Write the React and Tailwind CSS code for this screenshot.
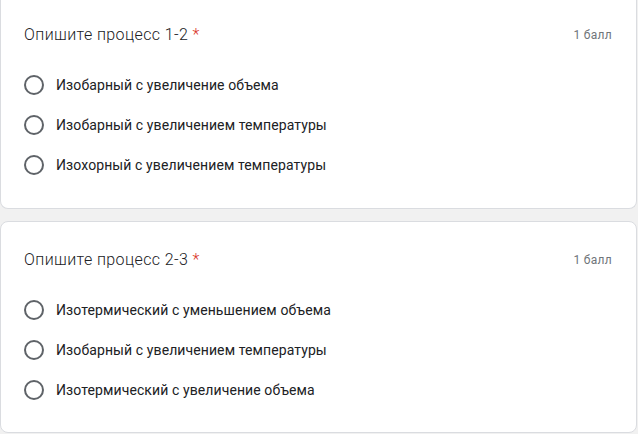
const questions = [
  {
    title: "Опишите процесс 1-2",
    options: [
      "Изобарный с увеличение объема",
      "Изобарный с увеличением температуры",
      "Изохорный с увеличением температуры",
    ],
  },
  {
    title: "Опишите процесс 2-3",
    options: [
      "Изотермический с уменьшением объема",
      "Изобарный с увеличением температуры",
      "Изотермический с увеличение объема",
    ],
  },
];

function Question({ q, first }) {
  return (
    <div
      className={
        "bg-white border border-[#dadce0] rounded-lg pl-[23px] pr-[24px] " +
        (first ? "-mt-[2px] border-t-0 rounded-t-none pt-[25px] pb-[33px]" : "pt-[26px] pb-[32px]")
      }
    >
      <div className="flex items-center justify-between h-[24px]">
        <div className="text-[16px] text-[#202124] tracking-[0.4px]" style={{ fontWeight: 350 }}>
          {q.title} <span className="text-[#d93025]">*</span>
        </div>
        <div className="text-[12px] text-[#70757a] tracking-[0.3px]">1 балл</div>
      </div>
      <div className="mt-[28px] flex flex-col gap-[20px]">
        {q.options.map((o) => (
          <div key={o} className="flex items-center h-[20px]">
            <div className="w-[20px] h-[20px] rounded-full border-2 border-[#5f6368] shrink-0" />
            <div className="ml-[12px] text-[14px] text-[#202124] tracking-[0.1px]">{o}</div>
          </div>
        ))}
      </div>
    </div>
  );
}

export default function App() {
  return (
    <div
      className="w-[638px] h-[434px] overflow-hidden bg-[#f1f1f1] pr-[1px]"
      style={{ fontFamily: "Roboto, 'Liberation Sans', sans-serif" }}
    >
      <div className="flex flex-col gap-[12px]">
        {questions.map((q, i) => (
          <Question key={i} q={q} first={i === 0} />
        ))}
      </div>
    </div>
  );
}
